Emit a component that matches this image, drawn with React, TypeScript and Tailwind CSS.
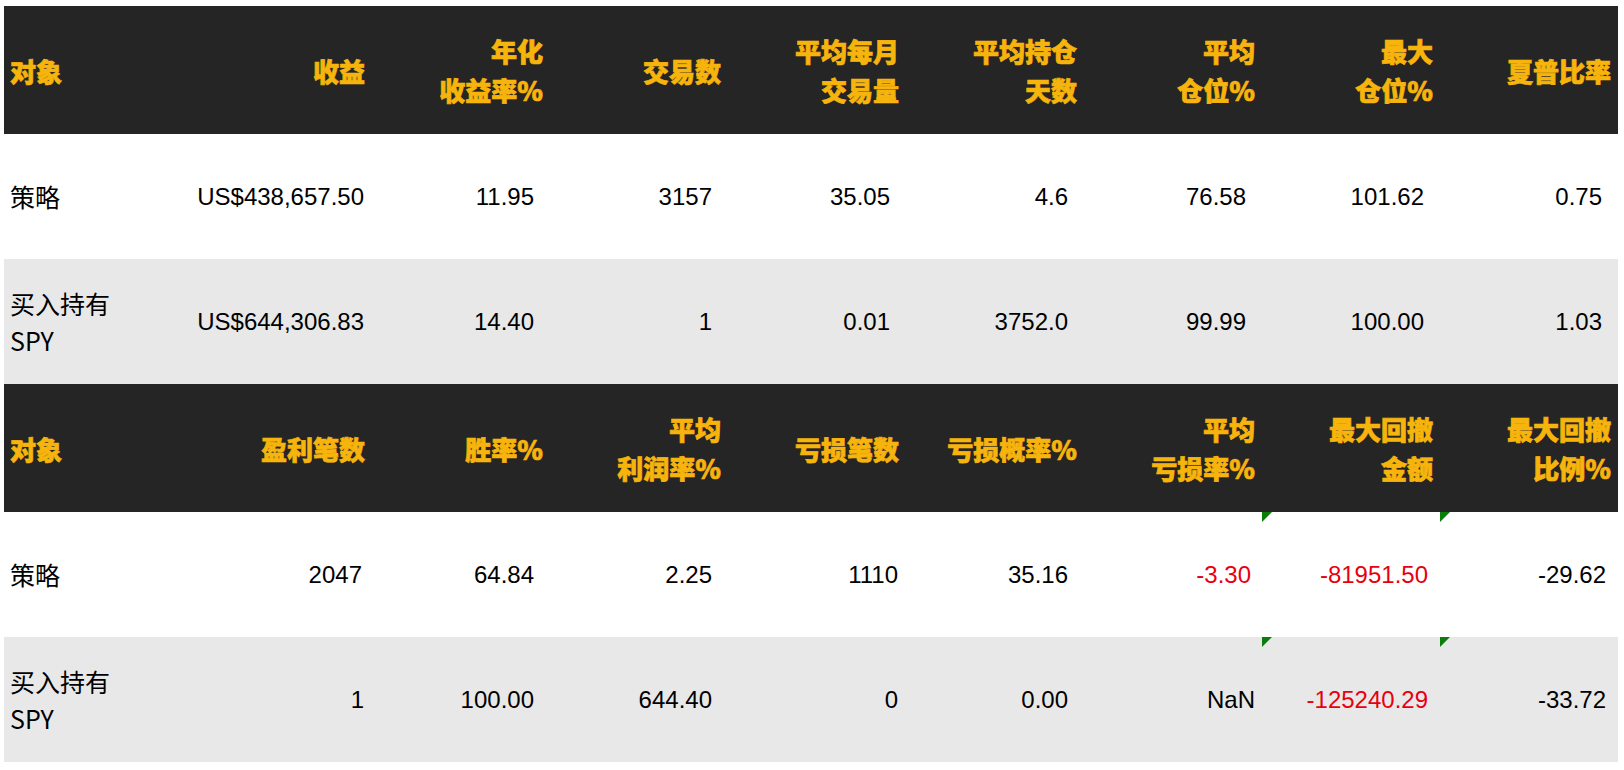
import React from "react";

type Cell = { v: string; red?: boolean; pr?: string; tri?: boolean };

const headFont = { fontFamily: '"Noto Sans CJK SC", "Noto Sans", sans-serif' };

const grid = "grid grid-cols-[190px_178px_178px_178px_178px_178px_178px_178px_178px]";

function Header({ cols }: { cols: string[][] }) {
  return (
    <div className={`${grid} h-[128px] bg-[#252525]`}>
      {cols.map((lines, i) => (
        <div
          key={i}
          className={
            i === 0
              ? "flex items-center justify-start pl-[6px]"
              : "flex items-center justify-end pr-[7px]"
          }
        >
          <div
            className="text-[26px] leading-[39px] font-black text-[#f6b40c] [-webkit-text-stroke:0.7px_#f6b40c] text-right whitespace-nowrap"
            style={headFont}
          >
            {lines.map((l, j) => (
              <div key={j}>{l}</div>
            ))}
          </div>
        </div>
      ))}
    </div>
  );
}

function Row({
  name,
  cells,
  gray,
}: {
  name: string[];
  cells: Cell[];
  gray?: boolean;
}) {
  return (
    <div className={`${grid} h-[125px] ${gray ? "bg-[#e8e8e8]" : "bg-white"}`}>
      <div className="flex items-center pl-[6px]">
        <div
          className="text-[25px] leading-[37px] text-black"
          style={headFont}
        >
          {name.map((n, j) => (
            <div key={j}>{n}</div>
          ))}
        </div>
      </div>
      {cells.map((c, i) => (
        <div
          key={i}
          className={`relative flex items-center justify-end ${c.pr ?? "pr-[16px]"}`}
        >
          {c.tri && (
            <svg
              className="absolute left-0 top-0"
              width="10"
              height="10"
              viewBox="0 0 10 10"
            >
              <polygon points="0,0 10,0 0,10" fill="#0a7d0a" />
            </svg>
          )}
          <span
            className={`text-[24px] leading-[30px] whitespace-nowrap ${
              c.red ? "text-[#e8000e]" : "text-black"
            }`}
            style={{ fontFamily: '"Liberation Sans", Arial, sans-serif' }}
          >
            {c.v}
          </span>
        </div>
      ))}
    </div>
  );
}

export default function App() {
  const h1 = [
    ["对象"],
    ["收益"],
    ["年化", "收益率%"],
    ["交易数"],
    ["平均每月", "交易量"],
    ["平均持仓", "天数"],
    ["平均", "仓位%"],
    ["最大", "仓位%"],
    ["夏普比率"],
  ];
  const h2 = [
    ["对象"],
    ["盈利笔数"],
    ["胜率%"],
    ["平均", "利润率%"],
    ["亏损笔数"],
    ["亏损概率%"],
    ["平均", "亏损率%"],
    ["最大回撤", "金额"],
    ["最大回撤", "比例%"],
  ];
  return (
    <div className="w-[1624px] h-[770px] bg-white pt-[6px] pl-[4px] overflow-hidden">
      <div className="w-[1614px]">
        <Header cols={h1} />
        <Row
          name={["策略"]}
          cells={[
            { v: "US$438,657.50", pr: "pr-[8px]" },
            { v: "11.95" },
            { v: "3157" },
            { v: "35.05" },
            { v: "4.6" },
            { v: "76.58" },
            { v: "101.62" },
            { v: "0.75" },
          ]}
        />
        <Row
          gray
          name={["买入持有", "SPY"]}
          cells={[
            { v: "US$644,306.83", pr: "pr-[8px]" },
            { v: "14.40" },
            { v: "1" },
            { v: "0.01" },
            { v: "3752.0" },
            { v: "99.99" },
            { v: "100.00" },
            { v: "1.03" },
          ]}
        />
        <Header cols={h2} />
        <Row
          name={["策略"]}
          cells={[
            { v: "2047", pr: "pr-[10px]" },
            { v: "64.84" },
            { v: "2.25" },
            { v: "1110", pr: "pr-[8px]" },
            { v: "35.16" },
            { v: "-3.30", red: true, pr: "pr-[11px]" },
            { v: "-81951.50", red: true, pr: "pr-[12px]", tri: true },
            { v: "-29.62", pr: "pr-[12px]", tri: true },
          ]}
        />
        <Row
          gray
          name={["买入持有", "SPY"]}
          cells={[
            { v: "1", pr: "pr-[8px]" },
            { v: "100.00" },
            { v: "644.40" },
            { v: "0", pr: "pr-[8px]" },
            { v: "0.00" },
            { v: "NaN", pr: "pr-[7px]" },
            { v: "-125240.29", red: true, pr: "pr-[12px]", tri: true },
            { v: "-33.72", pr: "pr-[12px]", tri: true },
          ]}
        />
      </div>
    </div>
  );
}
